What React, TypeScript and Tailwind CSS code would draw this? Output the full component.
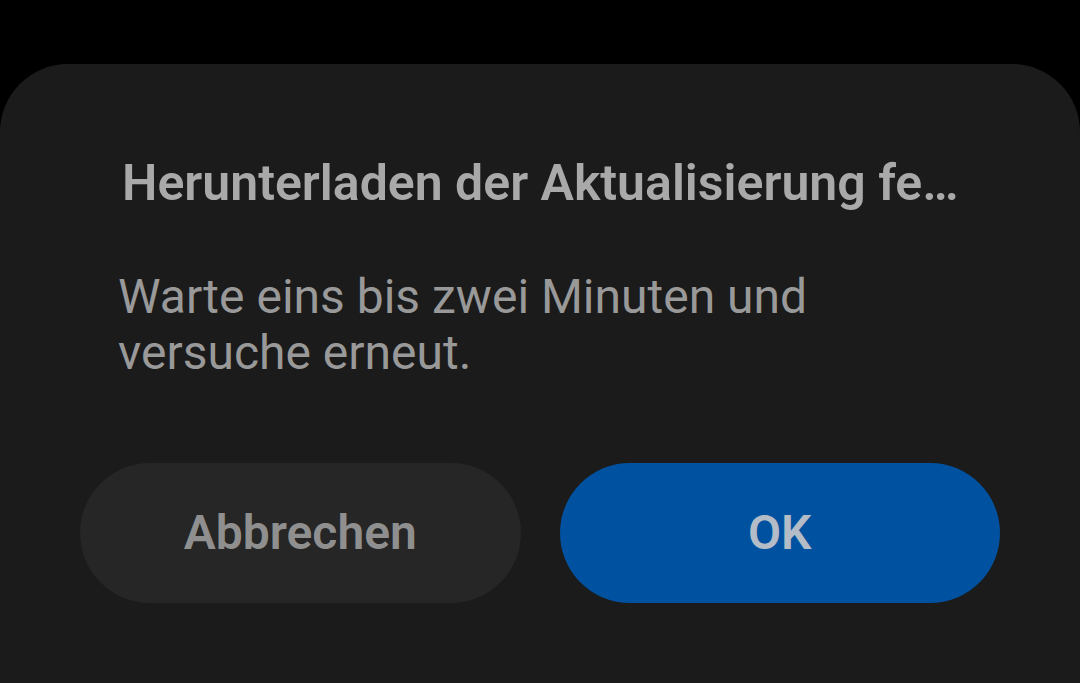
import React from 'react'

export default function App() {
  return (
    <div className="h-[683px] w-[1080px] overflow-hidden bg-black pt-[64px] font-['Roboto',sans-serif]">
      <div className="h-full rounded-t-[68px] bg-[#1b1b1b] px-[80px] pt-[150px]">
        <div className="px-[42px]">
          <h1 className="-mt-[61px] w-[840px] whitespace-nowrap text-[50px] font-semibold leading-[61px] text-[#a9a9a9]">
            Herunterladen der Aktualisierung fe…
          </h1>
          <p className="mt-[55px] -ml-[4px] w-[840px] text-[48px] leading-[56px] text-[#999999]">
            Warte eins bis zwei Minuten und versuche erneut.
          </p>
        </div>
        <div className="mt-[82px] flex gap-[39px]">
          <button className="flex h-[140px] flex-1 items-center justify-center rounded-full bg-[#262626] text-[48px] font-semibold text-[#8f8f8f]">
            Abbrechen
          </button>
          <button className="flex h-[140px] flex-1 items-center justify-center rounded-full bg-[#0052a0] text-[48px] font-semibold text-[#b4bcc8]">
            OK
          </button>
        </div>
      </div>
    </div>
  )
}
